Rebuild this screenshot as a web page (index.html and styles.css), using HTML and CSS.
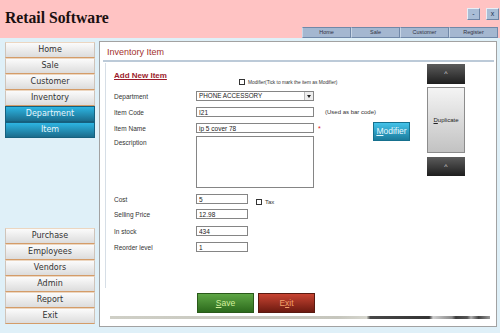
FILE: index.html
```html
<html>
<head>
<title>Retail Software</title>
<meta http-equiv="Content-Type" content="text/html; charset=utf-8"/>
<link rel="stylesheet" href="styles.css">
</head>
<body>
<div class="header">
  <h1 class="brand">Retail Software</h1>
  <div class="header-right">
    <div class="win-btns"><span class="win">-</span><span class="win">x</span></div>
    <div class="tabs">
      <span class="tab">Home</span><span class="tab">Sale</span><span class="tab">Customer</span><span class="tab">Register</span>
    </div>
  </div>
</div>

<div class="app">
  <div class="sidebar">
    <div class="nav-group">
      <div class="nav">Home</div>
      <div class="nav">Sale</div>
      <div class="nav">Customer</div>
      <div class="nav">Inventory</div>
      <div class="nav active">Department</div>
      <div class="nav active">Item</div>
    </div>
    <div class="nav-group">
      <div class="nav">Purchase</div>
      <div class="nav">Employees</div>
      <div class="nav">Vendors</div>
      <div class="nav">Admin</div>
      <div class="nav">Report</div>
      <div class="nav">Exit</div>
    </div>
  </div>

  <div class="panel">
    <div class="panel-title">Inventory Item</div>
    <div class="panel-body">
      <div class="form">
        <div class="form-head">
          <div class="add-new">Add New Item</div>
          <div class="mod-check"><span class="check"></span>Modifier(Tick to mark the item as Modifier)</div>
        </div>
        <div class="row r-dept">
          <div class="label">Department</div>
          <div class="select">PHONE ACCESSORY<span class="arrow"></span></div>
        </div>
        <div class="row r-code">
          <div class="label">Item Code</div>
          <input class="field" type="text" value="I21">
          <span class="note">(Used as bar code)</span>
        </div>
        <div class="row r-name">
          <div class="label">Item Name</div>
          <input class="field" type="text" value="ip 5 cover 78">
          <span class="req">*</span>
          <div class="btn-modifier"><u>M</u>odifier</div>
        </div>
        <div class="row r-desc">
          <div class="label">Description</div>
          <textarea class="field memo"></textarea>
        </div>
        <div class="row r-cost">
          <div class="label">Cost</div>
          <input class="field short" type="text" value="5">
          <span class="tax"><span class="check"></span>Tax</span>
        </div>
        <div class="row r-sell">
          <div class="label">Selling Price</div>
          <input class="field short" type="text" value="12.98">
        </div>
        <div class="row r-stock">
          <div class="label">In stock</div>
          <input class="field short" type="text" value="434">
        </div>
        <div class="row r-reorder">
          <div class="label">Reorder level</div>
          <input class="field short" type="text" value="1">
        </div>
      </div>
      <div class="side-actions">
        <div class="btn-dark up">^</div>
        <div class="btn-dup"><u>D</u>uplicate</div>
        <div class="btn-dark down">^</div>
      </div>
    </div>
    <div class="actions">
      <div class="btn-save"><u>S</u>ave</div>
      <div class="btn-exit">E<u>x</u>it</div>
    </div>
    <div class="bar"></div>
  </div>
</div>
</body>
</html>
```

FILE: styles.css
```css
body {
    margin:0;
    background:#dff0f8;
    font-family:"Liberation Sans", Arial, sans-serif;
    overflow:hidden;
}
.header {
    height:38px;
    background:#ffc3c3;
    display:flex;
    justify-content:space-between;
}
.brand {
    margin:0;
    padding:9px 0 0 5px;
    font-family:"Liberation Serif", serif;
    font-size:15.7px;
    line-height:17px;
    font-weight:bold;
    color:#1a1010;
}
.header-right {
    display:flex;
    flex-direction:column;
    align-items:flex-end;
    justify-content:space-between;
}
.win-btns {
    display:flex;
    gap:6px;
    padding-top:8px;
    margin-right:1px;
}
.win {
    width:13px;
    height:12px;
    box-sizing:border-box;
    background:#a9bdd5;
    border:1px solid #e8eef6;
    border-right-color:#6d84a4;
    border-bottom-color:#6d84a4;
    font-size:7px;
    line-height:10px;
    text-align:center;
    color:#203050;
}
.tabs {
    display:flex;
    margin-right:2px;
}
.tab {
    width:49px;
    height:11px;
    box-sizing:border-box;
    background:#a4b7d0;
    border:1px solid #7088a8;
    border-left-color:#c8d6e6;
    font-size:5.5px;
    line-height:9px;
    text-align:center;
    color:#334;
}

.app {
    display:flex;
    padding:3px 0 0 5px;
}
.sidebar {
    width:90px;
    height:282px;
    margin-top:1px;
    display:flex;
    flex-direction:column;
    justify-content:space-between;
}
.nav {
    height:16px;
    box-sizing:border-box;
    background:linear-gradient(#fbfbfb, #dcdcdc);
    border:1px solid #cfc4ba;
    border-top-color:#ecd6c0;
    border-bottom-color:#d49c68;
    font-family:"DejaVu Sans", sans-serif;
    font-size:8px;
    line-height:14px;
    text-align:center;
    color:#333;
}
.nav.active {
    background:linear-gradient(#2db5e2, #1b6c8c);
    border-color:#16607e;
    color:#e6f6fc;
}

.panel {
    width:398px;
    height:286px;
    margin-left:4px;
    box-sizing:border-box;
    background:#fff;
    border:1px solid #a2a2a2;
    display:flex;
    flex-direction:column;
}
.panel-title {
    margin:0 2px 0 3px;
    padding:5px 0 2px 4px;
    font-size:9px;
    line-height:11px;
    color:#a3302e;
    border-bottom:2px solid #bccad8;
}
.panel-body {
    display:flex;
    height:225px;
    margin:1px 0 0 5px;
    border-left:1px solid #d6dee6;
}
.form {
    flex:1;
    padding:8px 0 0 8px;
    font-size:6.5px;
    color:#333;
}
.form-head {
    display:flex;
    height:14px;
}
.add-new {
    width:125px;
    font-size:8px;
    line-height:10px;
    font-weight:bold;
    color:#9c1c2c;
    text-decoration:underline;
}
.mod-check {
    align-self:flex-end;
    display:flex;
    align-items:center;
    font-size:4.8px;
    color:#333;
}
.check {
    display:inline-block;
    width:6px;
    height:6px;
    box-sizing:border-box;
    border:1px solid #333;
    background:#fff;
    margin-right:3px;
}
.row {
    display:flex;
    align-items:center;
    height:10px;
}
.r-dept { margin-top:6px; }
.r-code { margin-top:6px; }
.r-name { margin-top:6px; }
.r-desc { margin-top:3px; height:52px; align-items:flex-start; }
.r-cost { margin-top:6px; }
.r-sell { margin-top:5px; }
.r-stock { margin-top:7px; }
.r-reorder { margin-top:6px; }
.label {
    width:82px;
    flex:none;
}
.r-desc .label {
    padding-top:3px;
}
.field {
    width:118px;
    height:10px;
    box-sizing:border-box;
    margin:0;
    padding:0 2px;
    border:1px solid #858585;
    font-family:"Liberation Sans", Arial, sans-serif;
    font-size:6.5px;
    color:#222;
    background:#fff;
    outline:none;
}
.field.memo {
    height:52px;
    resize:none;
}
.field.short {
    width:52px;
}
.select {
    width:118px;
    height:10px;
    box-sizing:border-box;
    border:1px solid #858585;
    padding:0 2px;
    line-height:8px;
    font-size:6.3px;
    color:#222;
    position:relative;
}
.arrow {
    position:absolute;
    right:0;
    top:0;
    width:8px;
    height:8px;
    background:#eee;
    border-left:1px solid #bbb;
}
.arrow:after {
    content:"";
    position:absolute;
    left:2px;
    top:3px;
    border-left:2px solid transparent;
    border-right:2px solid transparent;
    border-top:3px solid #222;
}
.note {
    margin-left:11px;
    font-size:6px;
}
.req {
    width:10px;
    padding-left:4px;
    box-sizing:border-box;
    color:#e02020;
    font-size:7px;
}
.btn-modifier {
    width:37px;
    height:19px;
    margin:3px 0 -3px 49px;
    box-sizing:border-box;
    background:linear-gradient(#43c3ea, #1b7b9c);
    border:1px solid #16708e;
    font-size:8.5px;
    line-height:17px;
    text-align:center;
    color:#e6f8ff;
}
.tax {
    display:flex;
    align-items:center;
    margin:5px 0 0 8px;
    font-size:6px;
}

.side-actions {
    width:38px;
    margin:1px 31px 0 0;
    display:flex;
    flex-direction:column;
}
.btn-dark {
    height:20px;
    background:linear-gradient(#5c5c5c, #1e1e1e);
    color:#d8d8d8;
    font-size:7px;
    line-height:20px;
    text-align:center;
}
.btn-dark.down {
    height:19px;
    margin-top:4px;
    line-height:19px;
}
.btn-dup {
    height:66px;
    margin-top:3px;
    box-sizing:border-box;
    background:linear-gradient(#f4f4f4, #c2c2c2);
    border:1px solid #8c8c8c;
    font-size:6px;
    line-height:64px;
    text-align:center;
    color:#222;
}

.actions {
    display:flex;
    gap:4px;
    margin-top:5px;
    padding-left:97px;
}
.btn-save, .btn-exit {
    width:57px;
    height:20px;
    box-sizing:border-box;
    font-size:8.5px;
    line-height:18px;
    text-align:center;
}
.btn-save {
    background:linear-gradient(#5ea645, #2c6a1c);
    border:1px solid #2a5a1a;
    color:#d4f09c;
}
.btn-exit {
    background:linear-gradient(#c84432, #6c1a10);
    border:1px solid #5a1a10;
    color:#f2a06a;
}
.bar {
    height:3px;
    margin:3px 6px 0 10px;
    background:linear-gradient(to right, #cfcfc6 0%, #c6c6bd 60%, #d6d6ce 67.5%, #484848 68.5%, #333 84%, #cfcfcf 85%, #a4a4a4 88%, #8a8a8a 90%, #3e3e3e 91%, #555 94%, #b0b0b0 95%, #444 97%, #999 100%);
}
```
